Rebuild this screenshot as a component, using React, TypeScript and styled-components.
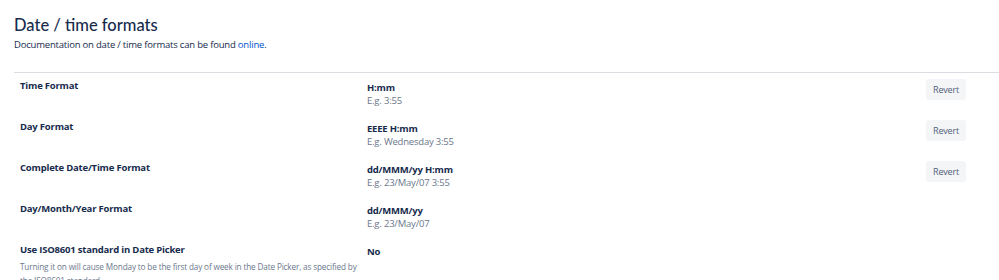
import React from 'react'
import styled, {createGlobalStyle} from 'styled-components'

const GlobalStyle = createGlobalStyle`
  html, body {
    margin: 0;
    padding: 0;
    background: #ffffff;
  }
  body {
    font-family: "Open Sans", "Noto Sans", sans-serif;
    color: #172b4d;
    letter-spacing: -0.2px;
  }
`

const PageWrapper = styled.div`
  padding: 13px 0 0 14px;
  width: 100%;
  box-sizing: border-box;
  overflow: hidden;
`

const Title = styled.h2`
  margin: 0;
  font-family: Lato, "Open Sans", sans-serif;
  font-size: 16.5px;
  line-height: 24px;
  font-weight: 500;
  letter-spacing: 0;
  color: #172b4d;
`

const Intro = styled.p`
  margin: 1px 0 0;
  font-size: 9.5px;
  line-height: 14px;
  color: #172b4d;
`

const Link = styled.a`
  color: #0052cc;
  text-decoration: none;
`

const Table = styled.div`
  margin-top: 20px;
  border-top: 1px solid #dcdde3;
`

const Row = styled.div`
  display: grid;
  grid-template-columns: 347px 1fr auto;
  padding: 6px 33px 7px 6px;
`

const LabelCell = styled.div`
  display: flex;
  flex-direction: column;
`

const Label = styled.div`
  font-size: 9.5px;
  line-height: 14px;
  font-weight: 700;
  color: #172b4d;
`

const Hint = styled.div`
  margin-top: 3px;
  max-width: 342px;
  font-size: 8.2px;
  line-height: 14px;
  letter-spacing: -0.15px;
  color: #6b778c;
`

const ValueCell = styled.div`
  padding-top: 2px;
  display: flex;
  flex-direction: column;
`

const Value = styled.div`
  font-size: 9.5px;
  line-height: 13px;
  font-weight: 700;
  color: #172b4d;
`

const Example = styled.div`
  font-size: 9.5px;
  line-height: 13px;
  color: #6b778c;
`

const RevertButton = styled.button<{$hidden?: boolean}>`
  visibility: ${(p) => (p.$hidden ? 'hidden' : 'visible')};
  align-self: start;
  height: 21px;
  width: 40px;
  padding: 0;
  border: none;
  border-radius: 3px;
  background: #f4f5f7;
  color: #505f79;
  font-family: inherit;
  font-size: 9px;
  letter-spacing: inherit;
  cursor: pointer;
`

interface FormatRowProps {
  label: string
  hint?: string
  value: string
  example?: string
  revertable?: boolean
}

const FormatRow = ({label, hint, value, example, revertable}: FormatRowProps) => {
  return (
    <Row>
      <LabelCell>
        <Label>{label}</Label>
        {hint && <Hint>{hint}</Hint>}
      </LabelCell>
      <ValueCell>
        <Value>{value}</Value>
        {example && <Example>{example}</Example>}
      </ValueCell>
      <RevertButton $hidden={!revertable}>Revert</RevertButton>
    </Row>
  )
}

const rows: FormatRowProps[] = [
  {label: 'Time Format', value: 'H:mm', example: 'E.g. 3:55', revertable: true},
  {label: 'Day Format', value: 'EEEE H:mm', example: 'E.g. Wednesday 3:55', revertable: true},
  {
    label: 'Complete Date/Time Format',
    value: 'dd/MMM/yy H:mm',
    example: 'E.g. 23/May/07 3:55',
    revertable: true,
  },
  {label: 'Day/Month/Year Format', value: 'dd/MMM/yy', example: 'E.g. 23/May/07'},
  {
    label: 'Use ISO8601 standard in Date Picker',
    hint: 'Turning it on will cause Monday to be the first day of week in the Date Picker, as specified by the ISO8601 standard.',
    value: 'No',
  },
]

function App() {
  return (
    <PageWrapper>
      <GlobalStyle />
      <Title>Date / time formats</Title>
      <Intro>
        Documentation on date / time formats can be found <Link href="#">online</Link>.
      </Intro>
      <Table>
        {rows.map((row) => (
          <FormatRow key={row.label} {...row} />
        ))}
      </Table>
    </PageWrapper>
  )
}

export default App
